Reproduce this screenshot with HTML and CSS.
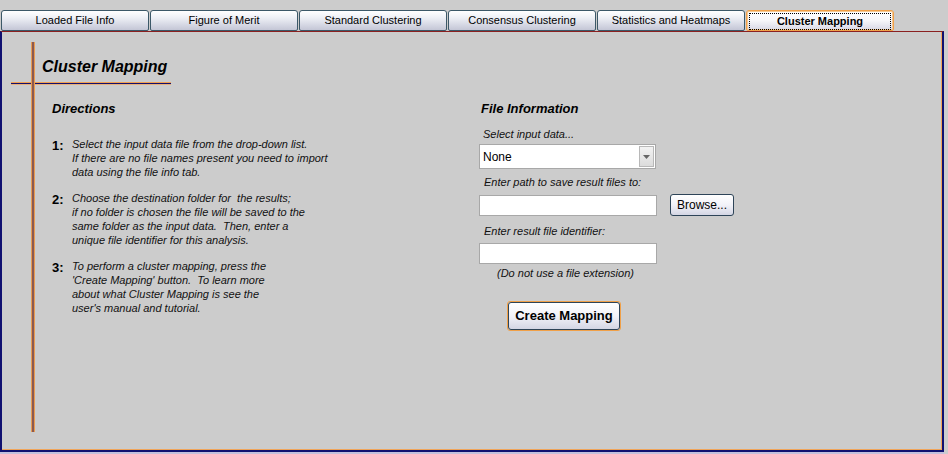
FILE: index.html
```html
<!DOCTYPE html>
<html>
<head>
<meta charset="utf-8">
<link rel="stylesheet" href="styles.css">
</head>
<body>
<div class="tabs">
  <div class="tab">Loaded File Info</div>
  <div class="tab">Figure of Merit</div>
  <div class="tab">Standard Clustering</div>
  <div class="tab">Consensus Clustering</div>
  <div class="tab">Statistics and Heatmaps</div>
  <div class="tab active"><span class="focus">Cluster Mapping</span></div>
</div>
<div class="panel">
  <div class="deco-v"></div>
  <div class="deco-h"></div>
  <h1 class="title">Cluster Mapping</h1>
  <div class="columns">
    <section class="directions">
      <h2 class="heading">Directions</h2>
      <div class="step">
        <span class="num">1:</span>
        <p class="text">Select the input data file from the drop-down list.<br>If there are no file names present you need to import<br>data using the file info tab.</p>
      </div>
      <div class="step">
        <span class="num">2:</span>
        <p class="text">Choose the destination folder for &nbsp;the results;<br>if no folder is chosen the file will be saved to the<br>same folder as the input data. &nbsp;Then, enter a<br>unique file identifier for this analysis.</p>
      </div>
      <div class="step">
        <span class="num">3:</span>
        <p class="text">To perform a cluster mapping, press the<br>'Create Mapping' button. &nbsp;To learn more<br>about what Cluster Mapping is see the<br>user's manual and tutorial.</p>
      </div>
    </section>
    <section class="fileinfo">
      <h2 class="heading fi-heading">File Information</h2>
      <div class="label l1">Select input data...</div>
      <div class="select">
        <span class="select-value">None</span>
        <span class="select-arrow"><svg width="7" height="4" viewBox="0 0 7 4"><path d="M0 0H7L3.5 4Z" fill="#666"/></svg></span>
      </div>
      <div class="label l2">Enter path to save result files to:</div>
      <div class="row">
        <div class="field"></div>
        <div class="btn browse">Browse...</div>
      </div>
      <div class="label l3">Enter result file identifier:</div>
      <div class="field f2"></div>
      <div class="note">(Do not use a file extension)</div>
      <div class="create-wrap"><div class="btn create">Create Mapping</div></div>
    </section>
  </div>
</div>
</body>
</html>
```
FILE: styles.css
```css
html, body {
  margin: 0;
  padding: 0;
  background: #cccccc;
  font-family: "Liberation Sans", Arial, sans-serif;
  color: #000;
}
body {
  width: 948px;
  height: 454px;
  overflow: hidden;
}
.tabs {
  display: flex;
  gap: 1px;
  padding: 10px 0 0 1px;
  height: 21px;
  box-sizing: content-box;
}
.tab {
  width: 148px;
  height: 21px;
  box-sizing: border-box;
  border: 1px solid #3c5868;
  border-radius: 3px 3px 2px 2px;
  background: linear-gradient(#ffffff 0%, #eef0f6 35%, #c4c6d6 100%);
  font-size: 11px;
  line-height: 19px;
  text-align: center;
  white-space: nowrap;
}
.tab.active {
  border: 1px solid #f0a048;
  box-shadow: inset 0 0 0 1px #f7c890;
  font-weight: bold;
  background: linear-gradient(#ffffff 0%, #f6f6fa 50%, #d8d8e6 100%);
  padding: 2px;
}
.tab.active .focus {
  display: block;
  height: 15px;
  border: 1px dotted #000;
  line-height: 14px;
}
.panel {
  position: relative;
  width: 944px;
  height: 421px;
  box-sizing: border-box;
  border-top: 1px solid #8a2020;
  border-left: 2px solid #101070;
  border-right: 2px solid #101070;
  border-bottom: 2px solid #101070;
  box-shadow: inset -1px -1px 0 #f0a458, 0 2px 0 #c4c0dc;
  padding-top: 25px;
}
.deco-v {
  position: absolute;
  left: 29px;
  top: 10px;
  width: 2px;
  height: 390px;
  background: #8a5a52;
  border-left: 1px solid #e89a50;
  border-right: 1px solid #e89a50;
  z-index: 2;
}
.deco-h {
  position: absolute;
  left: 9px;
  top: 50px;
  width: 160px;
  height: 1px;
  background: #14106e;
  border-top: 1px solid #f0a050;
  border-bottom: 1px solid #e8b078;
  z-index: 1;
}
.title {
  margin: 0 0 0 40px;
  font-size: 16px;
  font-weight: bold;
  font-style: italic;
  line-height: 20px;
}
.columns {
  display: flex;
  margin-top: 24px;
}
.heading {
  margin: 0;
  font-size: 13px;
  font-weight: bold;
  font-style: italic;
  line-height: 16px;
}
.directions {
  width: 477px;
  padding-left: 50px;
  box-sizing: border-box;
  flex: none;
}
.step {
  display: flex;
  margin-top: 12px;
}
.step:first-of-type {
  margin-top: 20px;
}
.num {
  width: 20px;
  font-size: 13px;
  font-weight: bold;
  line-height: 14px;
  padding-top: 2px;
  flex: none;
}
.text {
  margin: 0;
  font-size: 11px;
  font-style: italic;
  line-height: 14px;
  color: #111;
}
.fileinfo {
  display: flex;
  flex-direction: column;
  align-items: flex-start;
}
.fi-heading {
  margin-left: 2px;
}
.label {
  font-size: 11px;
  font-style: italic;
  line-height: 14px;
  color: #111;
  margin-left: 4px;
}
.l1 { margin-top: 10px; }
.l2 { margin-top: 6px; margin-left: 5px; }
.l3 { margin-top: 8px; margin-left: 5px; }
.select {
  margin-top: 3px;
  width: 177px;
  height: 25px;
  box-sizing: border-box;
  background: #fff;
  border: 1px solid #a8a8a8;
  display: flex;
  align-items: center;
  justify-content: space-between;
}
.select-value {
  font-size: 12px;
  padding-left: 3px;
}
.select-arrow {
  width: 15px;
  height: 21px;
  margin-right: 1px;
  box-sizing: border-box;
  border: 1px solid #b8b8b8;
  background: linear-gradient(#f2f2f2, #dcdcdc);
  display: flex;
  align-items: center;
  justify-content: center;
}
.row {
  margin-top: 5px;
  display: flex;
  align-items: flex-start;
  gap: 13px;
}
.field {
  width: 178px;
  height: 21px;
  box-sizing: border-box;
  background: #fff;
  border: 1px solid #a8a8a8;
  margin-top: 1px;
}
.f2 {
  margin-top: 5px;
}
.btn {
  box-sizing: border-box;
  border: 1px solid #2e4458;
  border-radius: 3px;
  background: linear-gradient(#ffffff 0%, #f2f2f8 50%, #d4d6e4 100%);
  text-align: center;
  white-space: nowrap;
}
.browse {
  width: 64px;
  height: 22px;
  font-size: 12px;
  line-height: 20px;
}
.note {
  margin-top: 2px;
  margin-left: 18px;
  font-size: 11px;
  font-style: italic;
  line-height: 14px;
  color: #111;
}
.create-wrap {
  margin-top: 21px;
  margin-left: 28px;
  border: 1px solid #f0a048;
  border-radius: 3px;
}
.create {
  width: 112px;
  height: 28px;
  font-size: 13px;
  font-weight: bold;
  line-height: 26px;
}
```
